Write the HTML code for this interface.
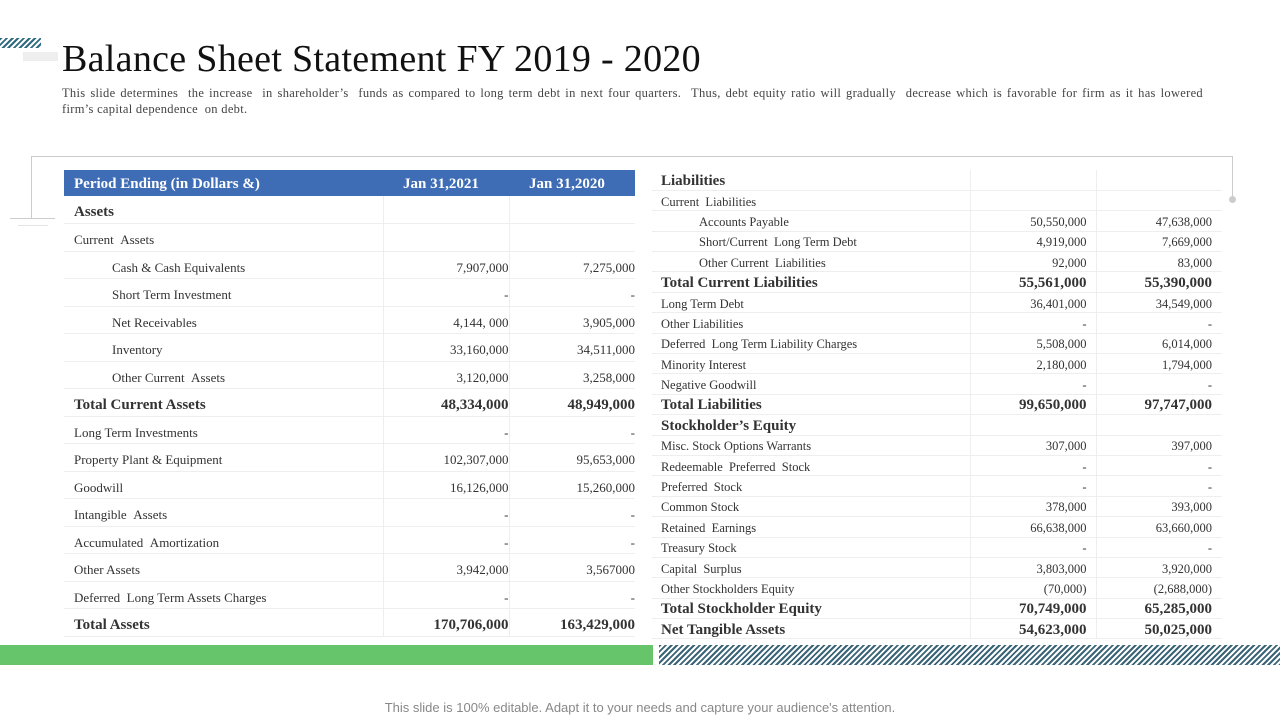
<!DOCTYPE html>
<html><head><meta charset="utf-8"><style>
*{margin:0;padding:0;box-sizing:border-box}
body{width:1280px;height:720px;background:#fff;position:relative;overflow:hidden;font-family:"Liberation Serif",serif;color:#333}
.abs{position:absolute}
h1{position:absolute;left:62px;top:37px;font-size:38px;font-weight:normal;color:#111;letter-spacing:0.3px}
.sub{position:absolute;left:62px;top:86px;width:1141px;font-size:12.5px;line-height:15.5px;color:#444;letter-spacing:0.3px}
.sub .l1{white-space:nowrap;text-align:justify;text-align-last:justify}
table{position:absolute;border-collapse:collapse;table-layout:fixed}
td{white-space:nowrap;overflow:visible;border-bottom:1px solid #eee;border-right:1px solid #eee}
td:last-child{border-right:none}
td.n{text-align:right}
.L td{height:27.5px;font-size:13px;padding-top:6px}
.L td:first-child{padding-left:10px}
.R td{height:20.4px;font-size:12.5px;padding-top:2px;line-height:16px}
.R td:first-child{padding-left:9px}
.R td.n:nth-child(2){padding-right:9px}
.R td:nth-child(3){padding-right:10px}
.b{font-weight:bold;font-size:15px!important;color:#333}
.i td:first-child{padding-left:48px!important}
.R .i td:first-child{padding-left:47px!important}
.L tr.hd td{background:#3f6db5;color:#fff;font-weight:bold;font-size:15px;height:26px;border:none;padding-top:2px}
</style></head><body>
<div class="abs" style="left:0;top:38px;width:41px;height:10px;background:repeating-linear-gradient(135deg,#2e6a80 0 2px,#fff 2px 4px)"></div>
<div class="abs" style="left:23px;top:52px;width:35px;height:9px;background:#eee"></div>
<h1>Balance Sheet Statement FY 2019 - 2020</h1>
<div class="sub"><div class="l1">This slide determines &nbsp;the increase &nbsp;in shareholder’s &nbsp;funds as compared to long term debt in next four quarters. &nbsp;Thus, debt equity ratio will gradually &nbsp;decrease which is favorable for firm as it has lowered</div><div>firm’s capital dependence &nbsp;on debt.</div></div>
<div class="abs" style="left:31px;top:156px;width:1202px;height:1px;background:#ccc"></div>
<div class="abs" style="left:31px;top:156px;width:1px;height:62px;background:#ccc"></div>
<div class="abs" style="left:1232px;top:156px;width:1px;height:42px;background:#ccc"></div>
<div class="abs" style="left:1229px;top:196px;width:7px;height:7px;border-radius:50%;background:#ccc"></div>
<div class="abs" style="left:10px;top:218px;width:45px;height:1px;background:#ccc"></div>
<div class="abs" style="left:18px;top:225px;width:30px;height:1px;background:#e4e4e4"></div>

<table class="L" style="left:64px;top:170px;width:571px">
<colgroup><col style="width:319px"><col style="width:126px"><col style="width:126px"></colgroup>
<tr class="hd"><td>Period Ending (in Dollars &amp;)</td><td style="padding-left:20px">Jan 31,2021</td><td style="padding-left:20px">Jan 31,2020</td></tr>
<tr><td class="b">Assets</td><td></td><td></td></tr>
<tr><td>Current &nbsp;Assets</td><td></td><td></td></tr>
<tr class="i"><td>Cash &amp; Cash Equivalents</td><td class="n">7,907,000</td><td class="n">7,275,000</td></tr>
<tr class="i"><td>Short Term Investment</td><td class="n">-</td><td class="n">-</td></tr>
<tr class="i"><td>Net Receivables</td><td class="n">4,144, 000</td><td class="n">3,905,000</td></tr>
<tr class="i"><td>Inventory</td><td class="n">33,160,000</td><td class="n">34,511,000</td></tr>
<tr class="i"><td>Other Current &nbsp;Assets</td><td class="n">3,120,000</td><td class="n">3,258,000</td></tr>
<tr><td class="b">Total Current Assets</td><td class="n b">48,334,000</td><td class="n b">48,949,000</td></tr>
<tr><td>Long Term Investments</td><td class="n">-</td><td class="n">-</td></tr>
<tr><td>Property Plant &amp; Equipment</td><td class="n">102,307,000</td><td class="n">95,653,000</td></tr>
<tr><td>Goodwill</td><td class="n">16,126,000</td><td class="n">15,260,000</td></tr>
<tr><td>Intangible &nbsp;Assets</td><td class="n">-</td><td class="n">-</td></tr>
<tr><td>Accumulated &nbsp;Amortization</td><td class="n">-</td><td class="n">-</td></tr>
<tr><td>Other Assets</td><td class="n">3,942,000</td><td class="n">3,567000</td></tr>
<tr><td>Deferred &nbsp;Long Term Assets Charges</td><td class="n">-</td><td class="n">-</td></tr>
<tr><td class="b">Total Assets</td><td class="n b">170,706,000</td><td class="n b">163,429,000</td></tr>
</table>

<table class="R" style="left:652px;top:170px;width:570px">
<colgroup><col style="width:318px"><col style="width:126px"><col style="width:126px"></colgroup>
<tr><td class="b">Liabilities</td><td></td><td></td></tr>
<tr><td>Current &nbsp;Liabilities</td><td></td><td></td></tr>
<tr class="i"><td>Accounts Payable</td><td class="n">50,550,000</td><td class="n">47,638,000</td></tr>
<tr class="i"><td>Short/Current &nbsp;Long Term Debt</td><td class="n">4,919,000</td><td class="n">7,669,000</td></tr>
<tr class="i"><td>Other Current &nbsp;Liabilities</td><td class="n">92,000</td><td class="n">83,000</td></tr>
<tr><td class="b">Total Current Liabilities</td><td class="n b">55,561,000</td><td class="n b">55,390,000</td></tr>
<tr><td>Long Term Debt</td><td class="n">36,401,000</td><td class="n">34,549,000</td></tr>
<tr><td>Other Liabilities</td><td class="n">-</td><td class="n">-</td></tr>
<tr><td>Deferred &nbsp;Long Term Liability Charges</td><td class="n">5,508,000</td><td class="n">6,014,000</td></tr>
<tr><td>Minority Interest</td><td class="n">2,180,000</td><td class="n">1,794,000</td></tr>
<tr><td>Negative Goodwill</td><td class="n">-</td><td class="n">-</td></tr>
<tr><td class="b">Total Liabilities</td><td class="n b">99,650,000</td><td class="n b">97,747,000</td></tr>
<tr><td class="b">Stockholder’s Equity</td><td></td><td></td></tr>
<tr><td>Misc. Stock Options Warrants</td><td class="n">307,000</td><td class="n">397,000</td></tr>
<tr><td>Redeemable &nbsp;Preferred &nbsp;Stock</td><td class="n">-</td><td class="n">-</td></tr>
<tr><td>Preferred &nbsp;Stock</td><td class="n">-</td><td class="n">-</td></tr>
<tr><td>Common Stock</td><td class="n">378,000</td><td class="n">393,000</td></tr>
<tr><td>Retained &nbsp;Earnings</td><td class="n">66,638,000</td><td class="n">63,660,000</td></tr>
<tr><td>Treasury Stock</td><td class="n">-</td><td class="n">-</td></tr>
<tr><td>Capital &nbsp;Surplus</td><td class="n">3,803,000</td><td class="n">3,920,000</td></tr>
<tr><td>Other Stockholders Equity</td><td class="n">(70,000)</td><td class="n">(2,688,000)</td></tr>
<tr><td class="b">Total Stockholder Equity</td><td class="n b">70,749,000</td><td class="n b">65,285,000</td></tr>
<tr><td class="b">Net Tangible Assets</td><td class="n b">54,623,000</td><td class="n b">50,025,000</td></tr>
</table>

<div class="abs" style="left:0;top:645px;width:653px;height:20px;background:#66c56a"></div>
<div class="abs" style="left:659px;top:645px;width:621px;height:20px;background:repeating-linear-gradient(135deg,#3a6478 0 2px,#fff 2px 4px)"></div>
<div class="abs" style="left:0;top:700px;width:1280px;text-align:center;font-family:'Liberation Sans',sans-serif;font-size:13px;color:#888">This slide is 100% editable. Adapt it to your needs and capture your audience's attention.</div>
</body></html>
